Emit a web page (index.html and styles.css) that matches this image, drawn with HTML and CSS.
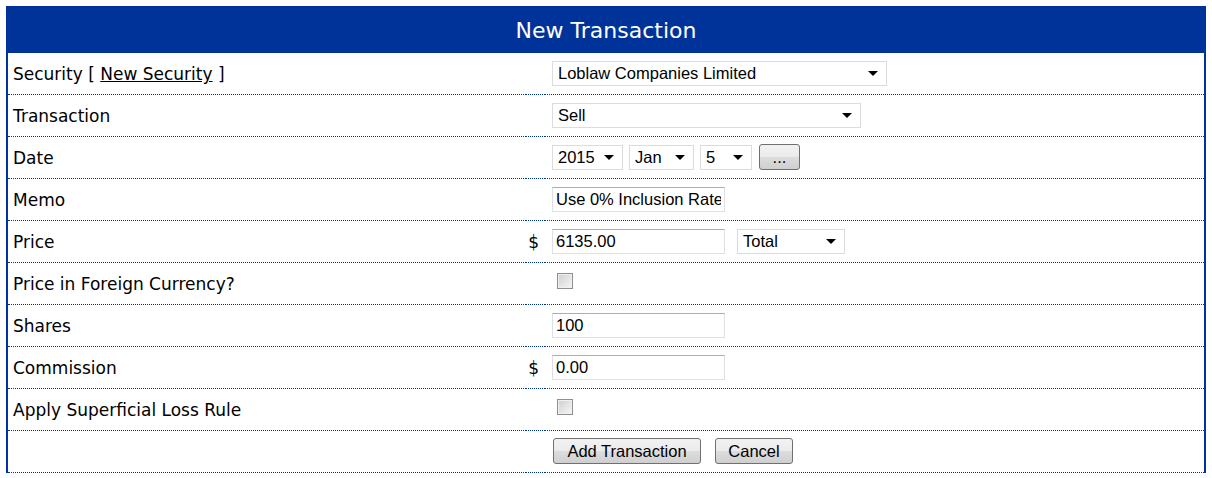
FILE: index.html
```html
<!DOCTYPE html>
<html lang="en">
<head>
  <meta charset="UTF-8">
  <title>New Transaction</title>
  <link rel="stylesheet" href="styles.css">
</head>
<body>
  <div class="panel">
    <div class="panel-title">New Transaction</div>
    <table class="form">
      <tr class="first">
        <td class="label">Security [ <a href="#">New Security</a> ]</td>
        <td class="cur"></td>
        <td class="field">
          <span class="sel w-security"><select><option>Loblaw Companies Limited</option></select></span>
        </td>
      </tr>
      <tr>
        <td class="label">Transaction</td>
        <td class="cur"></td>
        <td class="field">
          <span class="sel w-type"><select><option>Sell</option></select></span>
        </td>
      </tr>
      <tr>
        <td class="label">Date</td>
        <td class="cur"></td>
        <td class="field">
          <div class="inline">
            <span class="sel w-year"><select><option>2015</option></select></span>
            <span class="sel w-month"><select><option>Jan</option></select></span>
            <span class="sel w-day"><select><option>5</option></select></span>
            <button class="btn btn-cal">...</button>
          </div>
        </td>
      </tr>
      <tr>
        <td class="label">Memo</td>
        <td class="cur"></td>
        <td class="field"><input class="txt" type="text" value="Use 0% Inclusion Rate"></td>
      </tr>
      <tr>
        <td class="label">Price</td>
        <td class="cur">$</td>
        <td class="field">
          <div class="inline wide">
            <input class="txt" type="text" value="6135.00">
            <span class="sel w-total"><select><option>Total</option></select></span>
          </div>
        </td>
      </tr>
      <tr>
        <td class="label">Price in Foreign Currency?</td>
        <td class="cur"></td>
        <td class="field"><span class="chk"></span></td>
      </tr>
      <tr>
        <td class="label">Shares</td>
        <td class="cur"></td>
        <td class="field"><input class="txt" type="text" value="100"></td>
      </tr>
      <tr>
        <td class="label">Commission</td>
        <td class="cur">$</td>
        <td class="field"><input class="txt" type="text" value="0.00"></td>
      </tr>
      <tr>
        <td class="label">Apply Superficial Loss Rule</td>
        <td class="cur"></td>
        <td class="field"><span class="chk"></span></td>
      </tr>
      <tr>
        <td class="label"></td>
        <td class="cur"></td>
        <td class="field">
          <div class="inline buttons">
            <button class="btn btn-add">Add Transaction</button>
            <button class="btn btn-cancel">Cancel</button>
          </div>
        </td>
      </tr>
    </table>
  </div>
</body>
</html>
```

FILE: styles.css
```css
body {
  margin: 0;
  padding: 6px;
  background: #fff;
  font-family: "DejaVu Sans", Verdana, sans-serif;
}

.panel {
  width: 1200px;
  border-left: 2px solid #0033a0;
  border-right: 2px solid #0033a0;
  box-sizing: border-box;
}

.panel-title {
  background: #003399;
  color: #fff;
  height: 47px;
  box-sizing: border-box;
  padding-top: 2px;
  line-height: 46px;
  text-align: center;
  font-size: 22px;
  margin: 0 -2px;
}

table.form {
  width: 100%;
  border-collapse: collapse;
}

table.form td {
  height: 42px;
  box-sizing: border-box;
  padding: 0;
  border-bottom: 1px dotted #0033a0;
  vertical-align: middle;
}

table.form tr.first td {
  height: 41px;
}

td.label {
  width: 518px;
  padding-left: 5px !important;
  font-size: 17px;
  line-height: 20px;
  padding-top: 2px !important;
  color: #000;
}

td.label a {
  color: #000;
  text-decoration: underline;
}

td.cur {
  width: 19px;
  text-align: right;
  padding-right: 6px !important;
  padding-top: 2px !important;
  font-size: 17px;
  line-height: 20px;
}

td.field {
  padding-left: 7px !important;
  font-family: "Liberation Sans", Arial, sans-serif;
  font-size: 16.5px;
}

.inline {
  display: flex;
  align-items: center;
  gap: 6px;
}

.inline.wide {
  gap: 12px;
}

.inline.buttons {
  gap: 14px;
}

.sel {
  display: inline-block;
  position: relative;
  height: 25px;
  box-sizing: border-box;
  border: 1px solid #dcdcdc;
  background: #fff;
  vertical-align: middle;
}

.sel select {
  appearance: none;
  -webkit-appearance: none;
  border: none;
  background: transparent;
  width: 100%;
  height: 23px;
  padding: 0 0 0 5px;
  margin: 0;
  font-family: "Liberation Sans", Arial, sans-serif;
  font-size: 16.5px;
  color: #000;
  outline: none;
}

.sel::after {
  content: "";
  position: absolute;
  right: 8px;
  top: 9px;
  border-left: 5px solid transparent;
  border-right: 5px solid transparent;
  border-top: 5px solid #000;
  pointer-events: none;
}

.w-security { width: 335px; }
.w-type { width: 309px; }
.w-year { width: 71px; }
.w-month { width: 65px; }
.w-day { width: 52px; }
.w-total { width: 108px; }

.txt {
  width: 173px;
  height: 25px;
  box-sizing: border-box;
  border: 1px solid #dde1e7;
  border-top-color: #abadb3;
  padding: 0 3px;
  margin: 0;
  font-family: "Liberation Sans", Arial, sans-serif;
  font-size: 16.5px;
  color: #000;
  vertical-align: middle;
}

.chk {
  display: block;
  width: 16px;
  height: 16px;
  box-sizing: border-box;
  margin: 0 0 5px 5px;
  border: 1px solid #8f8f8f;
  background: linear-gradient(135deg, #cfcfcf, #f6f6f6);
  box-shadow: inset 0 0 0 1px #f0f0f0;
}

.btn {
  height: 26px;
  box-sizing: border-box;
  border: 1px solid #707070;
  border-radius: 3px;
  background: linear-gradient(#f2f2f2 0%, #ebebeb 50%, #dddddd 51%, #cfcfcf 100%);
  font-family: "Liberation Sans", Arial, sans-serif;
  font-size: 16.5px;
  color: #000;
  padding: 0;
  margin: 0;
}

.btn-cal {
  width: 41px;
  margin-left: 1px;
  line-height: 20px;
}

.btn-add {
  width: 148px;
  margin-left: 1px;
}

.btn-cancel {
  width: 78px;
}
```
